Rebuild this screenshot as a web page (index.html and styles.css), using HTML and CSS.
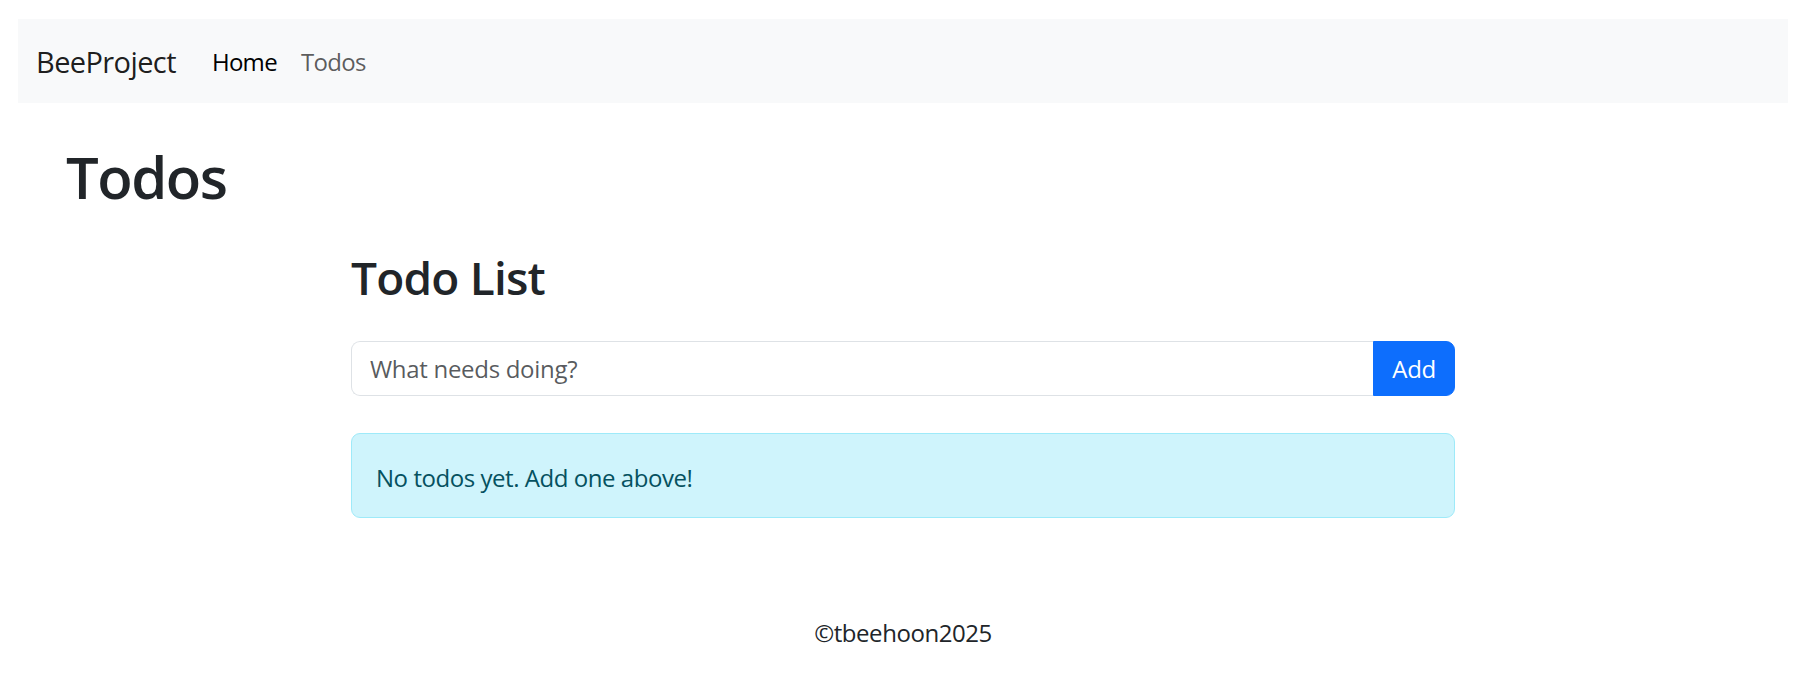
FILE: index.html
```html
<!DOCTYPE html>
<html lang="en">
<head>
<meta charset="utf-8">
<title>Todos - BeeProject</title>
<link rel="stylesheet" href="styles.css">
</head>
<body>
<div class="page">
  <nav class="navbar">
    <a class="brand" href="#">BeeProject</a>
    <ul class="nav-links">
      <li><a class="nav-link active" href="#">Home</a></li>
      <li><a class="nav-link" href="#">Todos</a></li>
    </ul>
  </nav>
  <main class="main">
    <h1 class="page-title">Todos</h1>
    <section class="todo">
      <h2 class="todo-title">Todo List</h2>
      <form class="input-group">
        <input class="todo-input" type="text" placeholder="What needs doing?">
        <button class="btn-add" type="button">Add</button>
      </form>
      <div class="alert">No todos yet. Add one above!</div>
    </section>
  </main>
  <footer class="footer">©tbeehoon2025</footer>
</div>
</body>
</html>
```
FILE: styles.css
```css
* { box-sizing: border-box; }

html, body {
  margin: 0;
  padding: 0;
  background: #ffffff;
}

body {
  font-family: "Open Sans", "Noto Sans", "Liberation Sans", sans-serif;
  font-size: 24px;
  color: #212529;
  letter-spacing: -0.45px;
}

.page {
  padding: 19px 15px 0 18px;
}

/* Navbar */
.navbar {
  display: flex;
  align-items: center;
  height: 84px;
  padding: 0 18px;
  background: #f8f9fa;
}

.brand {
  font-size: 29px;
  line-height: 45px;
  letter-spacing: -0.6px;
  color: rgba(0, 0, 0, 0.9);
  text-decoration: none;
  margin-right: 24px;
}

.nav-links {
  display: flex;
  list-style: none;
  margin: 0;
  padding: 2px 0 0 0;
}

.nav-link {
  display: block;
  padding: 0 12px;
  line-height: 36px;
  font-size: 24px;
  letter-spacing: -0.7px;
  color: rgba(0, 0, 0, 0.65);
  text-decoration: none;
}

.nav-link.active {
  color: #000000;
}

/* Main */
.page-title {
  margin: 39px 0 0 48px;
  font-size: 58px;
  line-height: 70px;
  font-weight: 600;
  letter-spacing: -1.5px;
}

.todo {
  width: 1104px;
  margin: 37px auto 0;
}

.todo-title {
  margin: 0 0 36px 0;
  font-size: 46px;
  line-height: 56px;
  font-weight: 600;
  letter-spacing: -0.8px;
}

.input-group {
  display: flex;
  margin: 0;
}

.todo-input {
  flex: 1;
  min-width: 0;
  height: 55px;
  padding: 8px 18px;
  font-family: inherit;
  font-size: 24px;
  line-height: 36px;
  letter-spacing: -0.3px;
  color: #212529;
  background: #ffffff;
  border: 1px solid #dee2e6;
  border-right: none;
  border-radius: 9px 0 0 9px;
  outline: none;
}

.todo-input::placeholder {
  color: rgba(33, 37, 41, 0.75);
}

.btn-add {
  height: 55px;
  padding: 0 18px;
  font-family: inherit;
  font-size: 24px;
  letter-spacing: -0.3px;
  color: #ffffff;
  background: #0d6efd;
  border: 1px solid #0d6efd;
  border-radius: 0 9px 9px 0;
}

.alert {
  margin-top: 37px;
  padding: 26px 24px 22px;
  line-height: 35px;
  color: #055160;
  background: #cff4fc;
  border: 1px solid #9eeaf9;
  border-radius: 9px;
}

.footer {
  margin-top: 97px;
  text-align: center;
  line-height: 36px;
}
```
